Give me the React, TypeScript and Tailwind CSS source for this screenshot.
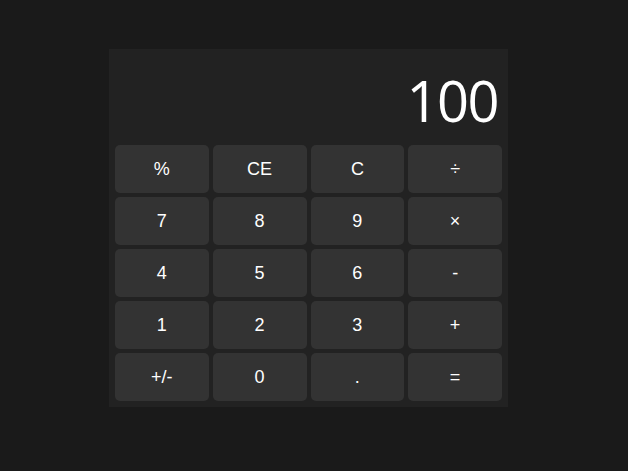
import React from 'react';

const keys = ['%', 'CE', 'C', '÷', '7', '8', '9', '×', '4', '5', '6', '-', '1', '2', '3', '+', '+/-', '0', '.', '='];

export default function App() {
  return (
    <div className="min-h-screen w-full bg-[#1a1a1a] flex justify-center pt-[49px] pr-[11px]" style={{ fontFamily: '"Liberation Sans", Arial, sans-serif' }}>
      <div className="w-[399px] h-[358px] bg-[#222222] p-[6px] flex flex-col">
        {/* Display */}
        <div className="h-[86px] mb-[4px] flex justify-end items-start pt-[17px] pr-[4px]">
          <span className="text-[56px] leading-none font-normal tracking-[-1.5px] text-white" style={{ fontFamily: '"Open Sans", sans-serif' }}>100</span>
        </div>

        {/* Keypad */}
        <div className="grid grid-cols-4 gap-[4px]">
          {keys.map((k) => (
            <button
              key={k}
              className="h-[48px] rounded-[5px] bg-[#333333] text-white text-[18px] flex items-center justify-center"
            >
              {k}
            </button>
          ))}
        </div>
      </div>
    </div>
  );
}
